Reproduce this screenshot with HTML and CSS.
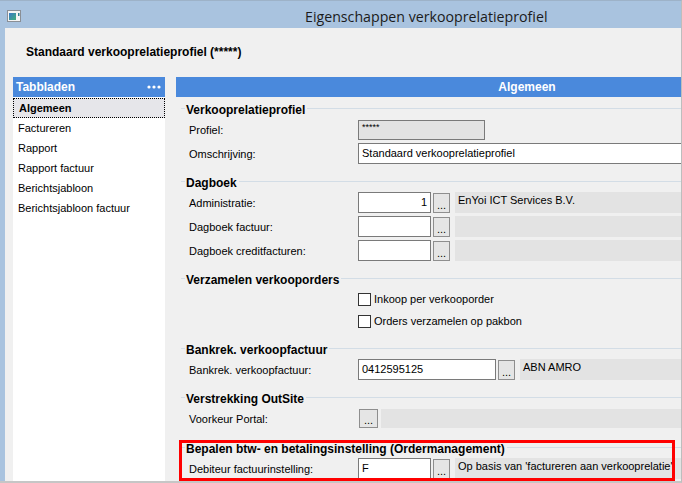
FILE: index.html
```html
<!DOCTYPE html>
<html lang="nl">
<head>
<meta charset="utf-8">
<title>Eigenschappen verkooprelatieprofiel</title>
<link rel="stylesheet" href="styles.css">
</head>
<body>
<div class="window">
  <div class="titlebar">
    <svg class="app-icon" width="14" height="12" viewBox="0 0 14 12">
      <defs>
        <linearGradient id="ig" x1="0" y1="0" x2="1" y2="1">
          <stop offset="0" stop-color="#3a78c8"/>
          <stop offset="1" stop-color="#3fae7a"/>
        </linearGradient>
      </defs>
      <rect x="0.5" y="0.5" width="13" height="11" fill="#f4f4f4" stroke="#8a8f96"/>
      <rect x="2" y="3" width="7" height="7" fill="url(#ig)"/>
      <rect x="11" y="3" width="1.5" height="3" fill="#2f7f8f"/>
    </svg>
    <div class="title">Eigenschappen verkooprelatieprofiel</div>
  </div>
  <div class="client">
    <div class="doc-title">Standaard verkooprelatieprofiel (*****)</div>
    <div class="panes">
      <div class="tabs">
        <div class="pane-head">
          <span>Tabbladen</span>
          <svg class="dots" width="14" height="4" viewBox="0 0 14 4">
            <circle cx="2" cy="2" r="1.6" fill="#fff"/>
            <circle cx="7" cy="2" r="1.6" fill="#fff"/>
            <circle cx="12" cy="2" r="1.6" fill="#fff"/>
          </svg>
        </div>
        <ul class="tab-list">
          <li class="active">Algemeen</li>
          <li>Factureren</li>
          <li>Rapport</li>
          <li>Rapport factuur</li>
          <li>Berichtsjabloon</li>
          <li>Berichtsjabloon factuur</li>
        </ul>
      </div>
      <div class="page">
        <div class="pane-head">Algemeen</div>
        <div class="page-body">
          <section class="group">
            <div class="legend"><span>Verkooprelatieprofiel</span></div>
            <div class="rows">
              <div class="row"><label>Profiel:</label><div class="input readonly">*****</div></div>
              <div class="row"><label>Omschrijving:</label><div class="input wide">Standaard verkooprelatieprofiel</div></div>
            </div>
          </section>
          <section class="group">
            <div class="legend"><span>Dagboek</span></div>
            <div class="rows">
              <div class="row"><label>Administratie:</label><div class="input narrow num">1</div><div class="pick">...</div><div class="display">EnYoi ICT Services B.V.</div></div>
              <div class="row"><label>Dagboek factuur:</label><div class="input narrow"></div><div class="pick">...</div><div class="display"></div></div>
              <div class="row"><label>Dagboek creditfacturen:</label><div class="input narrow"></div><div class="pick">...</div><div class="display"></div></div>
            </div>
          </section>
          <section class="group">
            <div class="legend"><span>Verzamelen verkooporders</span></div>
            <div class="rows tight">
              <div class="row check"><span class="checkbox"></span><span>Inkoop per verkooporder</span></div>
              <div class="row check"><span class="checkbox"></span><span>Orders verzamelen op pakbon</span></div>
            </div>
          </section>
          <section class="group">
            <div class="legend"><span>Bankrek. verkoopfactuur</span></div>
            <div class="rows">
              <div class="row"><label>Bankrek. verkoopfactuur:</label><div class="input account">0412595125</div><div class="pick">...</div><div class="display">ABN AMRO</div></div>
            </div>
          </section>
          <section class="group">
            <div class="legend"><span>Verstrekking OutSite</span></div>
            <div class="rows">
              <div class="row"><label>Voorkeur Portal:</label><div class="pick solo">...</div><div class="display near"></div></div>
            </div>
          </section>
          <section class="group flagged">
            <div class="legend"><span>Bepalen btw- en betalingsinstelling (Ordermanagement)</span></div>
            <div class="rows">
              <div class="row"><label>Debiteur factuurinstelling:</label><div class="input narrow">F</div><div class="pick">...</div><div class="display">Op basis van 'factureren aan verkooprelatie'</div></div>
            </div>
            <div class="flag-box"></div>
          </section>
        </div>
      </div>
    </div>
  </div>
</div>
</body>
</html>
```

FILE: styles.css
```css
html, body {
  margin: 0;
  padding: 0;
}
body {
  width: 682px;
  height: 483px;
  overflow: hidden;
  font-family: "Liberation Sans", Arial, sans-serif;
  font-size: 11px;
  color: #000;
}
.window {
  box-sizing: border-box;
  width: 682px;
  height: 483px;
  background: #a9c3df;
  border-top: 1px solid #9db2c8;
  border-right: 1px solid #bdbdbd;
  border-bottom: 2px solid #c6c6c6;
  padding-left: 5px;
  display: flex;
  flex-direction: column;
}
.titlebar {
  height: 27px;
  flex: 0 0 27px;
  display: flex;
  align-items: center;
}
.app-icon {
  margin-left: 2px;
  margin-top: 3px;
}
.title {
  margin-left: 284px;
  font-family: "Open Sans", "Noto Sans", sans-serif;
  font-size: 14.2px;
  color: #1b1b1b;
  white-space: nowrap;
  margin-top: 3px;
}
.client {
  flex: 1;
  min-height: 0;
  background: #f0f0f0;
  overflow: hidden;
  display: flex;
  flex-direction: column;
  padding-top: 16px;
}
.doc-title {
  font-weight: bold;
  font-size: 12px;
  line-height: 16px;
  margin: 0 0 17px 21px;
  white-space: nowrap;
}
.panes {
  flex: 1;
  min-height: 0;
  display: flex;
  gap: 11px;
  margin-left: 8px;
}
.tabs {
  flex: 0 0 152px;
  background: #fff;
  display: flex;
  flex-direction: column;
}
.page {
  flex: 0 0 702px;
}
.pane-head {
  height: 20px;
  background: #4a89dc;
  color: #fff;
  font-weight: bold;
  font-size: 12px;
  display: flex;
  align-items: center;
  justify-content: center;
}
.tabs .pane-head {
  justify-content: space-between;
  padding: 0 4px 0 3px;
}
.tab-list {
  list-style: none;
  margin: 0;
  padding: 1px 0 0;
}
.tab-list li {
  height: 20px;
  line-height: 21px;
  padding-left: 5px;
  white-space: nowrap;
}
.tab-list li.active {
  font-weight: bold;
  background: #e6e6ea;
  outline: 1px dotted #000;
  outline-offset: -1px;
  padding-left: 6px;
}
.page-body {
  padding: 4px 0 0 5px;
}
.group + .group {
  margin-top: 10px;
}
.group.flagged {
  margin-top: 11px;
}
.legend {
  display: flex;
  align-items: flex-start;
  height: 14px;
  margin-bottom: 4px;
  font-weight: bold;
  font-size: 12px;
  white-space: nowrap;
}
.legend::before,
.legend::after {
  content: "";
  margin-top: 7px;
  border-top: 1px solid #d3dde6;
}
.legend::before {
  width: 4px;
}
.legend::after {
  flex: 1;
}
.legend span {
  line-height: 14px;
  padding: 2px 2px 0 1px;
}
.rows {
  display: flex;
  flex-direction: column;
  gap: 3px;
}
.rows.tight {
  gap: 2px;
}
.row {
  display: flex;
  align-items: center;
  height: 21px;
  padding-left: 8px;
  white-space: nowrap;
}
.row label {
  width: 169px;
  flex: 0 0 169px;
}
.row.check {
  height: 20px;
  padding-left: 177px;
}
.checkbox {
  box-sizing: border-box;
  width: 13px;
  height: 13px;
  border: 1px solid #333;
  background: #fff;
  margin-right: 3px;
}
.input {
  box-sizing: border-box;
  height: 21px;
  border: 1px solid #7a7a7a;
  background: #fff;
  padding: 0 3px;
  line-height: 19px;
}
.input.narrow {
  width: 73px;
}
.input.num {
  text-align: right;
}
.input.wide {
  flex: 1;
}
.input.account {
  width: 138px;
}
.input.readonly {
  width: 127px;
  height: 20px;
  background: #e3e3e3;
  font-size: 9px;
  line-height: 10px;
  padding-top: 1px;
}
.pick {
  box-sizing: border-box;
  width: 17px;
  height: 20px;
  margin-left: 2px;
  border: 1px solid #8e8e8e;
  background: #e5e5e5;
  display: flex;
  align-items: flex-end;
  justify-content: center;
  line-height: 12px;
  padding-bottom: 1px;
}
.pick.solo {
  width: 19px;
  height: 19px;
  margin-left: 1px;
}
.display {
  box-sizing: border-box;
  flex: 1;
  height: 21px;
  background: #e3e3e3;
  margin-left: 5px;
  padding: 2px 3px 0;
  line-height: 13px;
}
.display.near {
  margin-left: 3px;
  height: 19px;
}
.group.flagged {
  position: relative;
}
.flag-box {
  position: absolute;
  left: -2px;
  top: 0;
  width: 496px;
  height: 41px;
  box-sizing: border-box;
  border: 3px solid #ff0000;
  pointer-events: none;
}
```
